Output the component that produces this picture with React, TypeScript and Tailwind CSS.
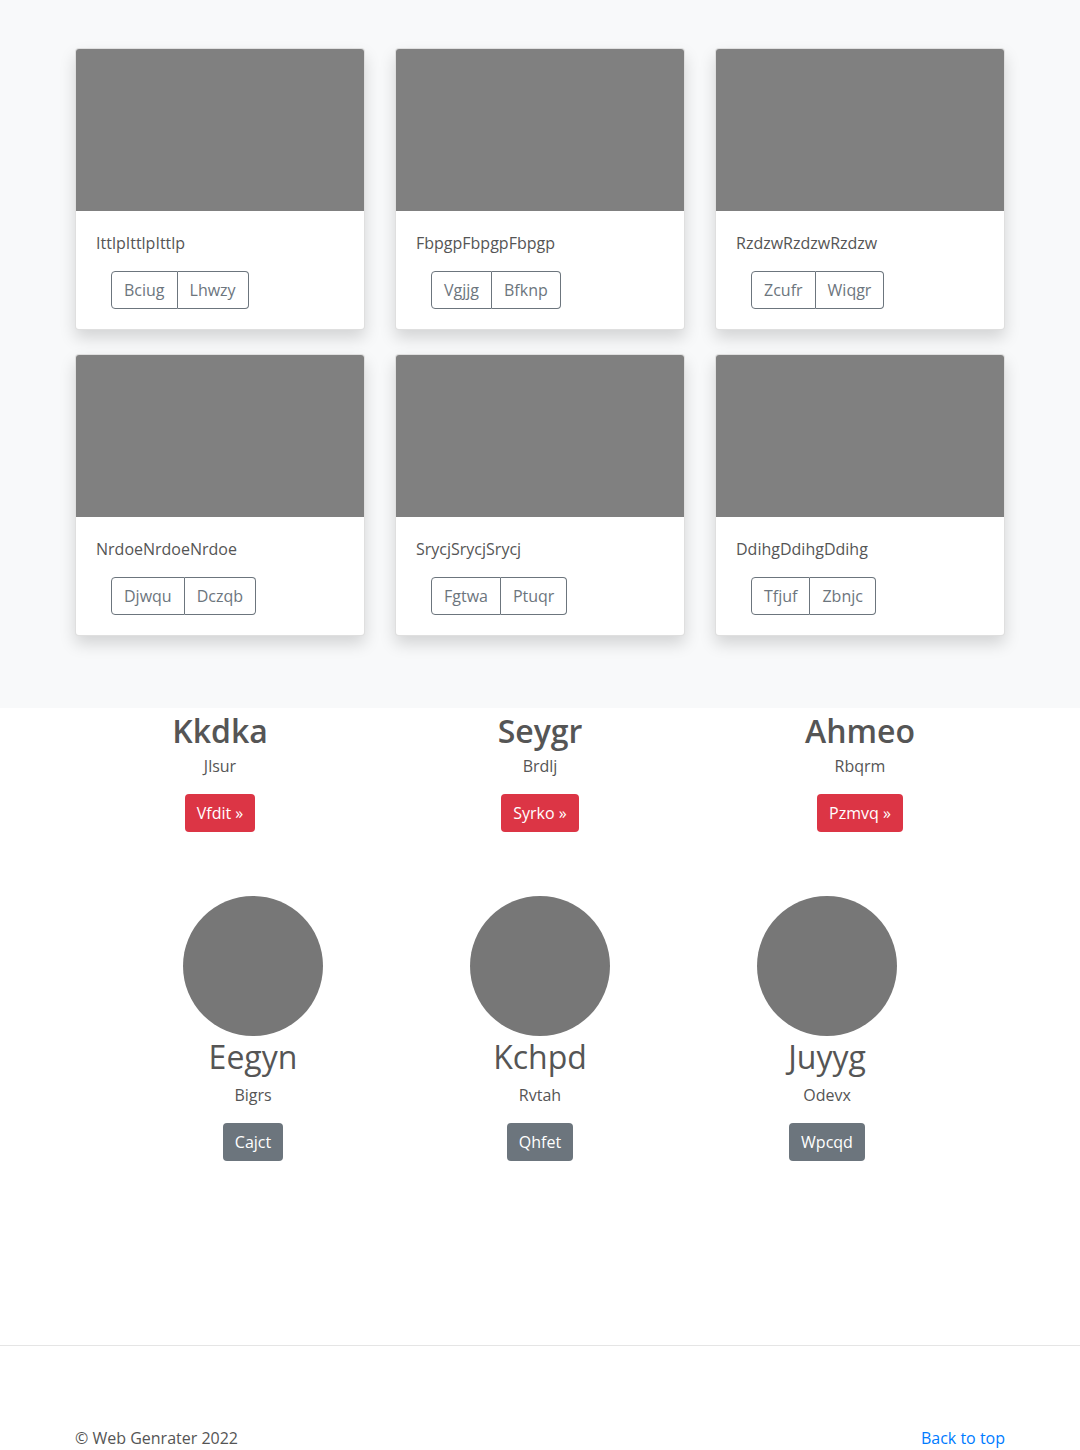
import React from "react";

const CARDS = [
  { title: "IttlpIttlpIttlp", a: "Bciug", b: "Lhwzy" },
  { title: "FbpgpFbpgpFbpgp", a: "Vgjjg", b: "Bfknp" },
  { title: "RzdzwRzdzwRzdzw", a: "Zcufr", b: "Wiqgr" },
  { title: "NrdoeNrdoeNrdoe", a: "Djwqu", b: "Dczqb" },
  { title: "SrycjSrycjSrycj", a: "Fgtwa", b: "Ptuqr" },
  { title: "DdihgDdihgDdihg", a: "Tfjuf", b: "Zbnjc" },
];

const HEADS = [
  { name: "Kkdka", sub: "Jlsur", btn: "Vfdit" },
  { name: "Seygr", sub: "Brdlj", btn: "Syrko" },
  { name: "Ahmeo", sub: "Rbqrm", btn: "Pzmvq" },
];

const PEOPLE = [
  { name: "Eegyn", sub: "Bigrs", btn: "Cajct" },
  { name: "Kchpd", sub: "Rvtah", btn: "Qhfet" },
  { name: "Juyyg", sub: "Odevx", btn: "Wpcqd" },
];

function Card({ title, a, b }: { title: string; a: string; b: string }) {
  return (
    <div className="bg-white border border-black/[0.125] rounded overflow-hidden shadow-[0_0.5rem_1rem_rgba(0,0,0,0.15)]">
      <div className="h-[162px] bg-[#808080]" />
      <div className="p-5">
        <p className="text-base leading-6 mb-4">{title}</p>
        <div className="flex ml-[15px]">
          <button className="h-[38px] px-3 border border-[#6c757d] text-[#6c757d] rounded-l">{a}</button>
          <button className="h-[38px] px-3 border border-l-0 border-[#6c757d] text-[#6c757d] rounded-r">{b}</button>
        </div>
      </div>
    </div>
  );
}

export default function App() {
  return (
    <div className="min-h-[1450px] bg-white text-[#555] font-['Open_Sans',sans-serif] text-base leading-6">
      {/* album */}
      <section className="bg-[#f8f9fa] pt-12 pb-[72px]">
        <div className="w-[930px] mx-auto grid grid-cols-3 gap-x-[30px] gap-y-6">
          {CARDS.map((c) => (
            <Card key={c.title} {...c} />
          ))}
        </div>
      </section>

      {/* headings */}
      <section className="w-[960px] mx-auto grid grid-cols-3 pt-1">
        {HEADS.map((h) => (
          <div key={h.name} className="flex flex-col items-center">
            <h2 className="text-[32px] leading-[38px] font-semibold mb-1">{h.name}</h2>
            <p className="mb-4">{h.sub}</p>
            <button className="h-[38px] px-3 rounded bg-[#dc3545] text-white">{h.btn} &raquo;</button>
          </div>
        ))}
      </section>

      {/* people */}
      <section className="w-[861px] mx-auto grid grid-cols-3 mt-16">
        {PEOPLE.map((p) => (
          <div key={p.name} className="flex flex-col items-center">
            <div className="w-[140px] h-[140px] rounded-full bg-[#777]" />
            <h2 className="text-[32px] leading-[42px] font-normal mb-[5px]">{p.name}</h2>
            <p className="mb-4">{p.sub}</p>
            <button className="h-[38px] px-3 rounded bg-[#6c757d] text-white">{p.btn}</button>
          </div>
        ))}
      </section>

      <hr className="mt-[184px] border-t border-[#e5e5e5]" />

      <footer className="w-[930px] mx-auto pt-20 flex justify-between items-end">
        <p>&copy; Web Genrater 2022</p>
        <a href="#" className="text-[#007bff] -mt-2">Back to top</a>
      </footer>
    </div>
  );
}
